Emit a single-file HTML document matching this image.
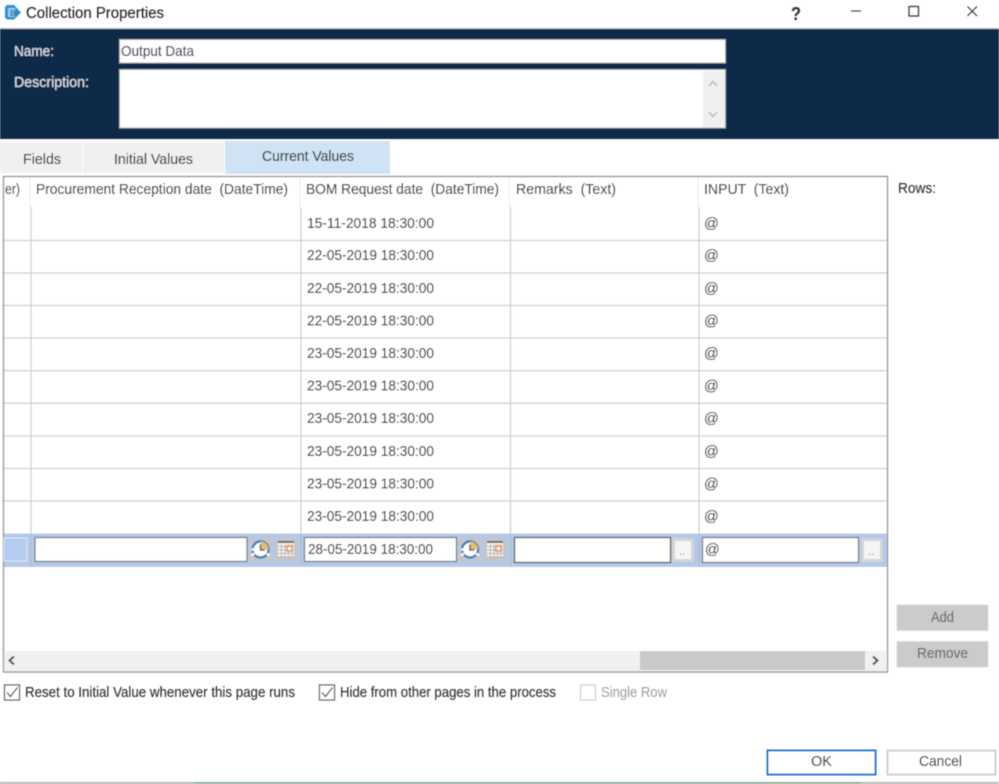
<!DOCTYPE html>
<html lang="en">
<head>
<meta charset="utf-8">
<title>Collection Properties</title>
<style>
html,body{margin:0;padding:0;background:#fff;width:999px;height:784px;overflow:hidden}
svg{display:block}
text{font-family:"Liberation Sans",sans-serif;font-size:14.6px;fill:#2e2e2e;white-space:pre;stroke:#2e2e2e;stroke-width:.12px}
.g{filter:url(#b)}
</style>
</head>
<body>
<svg width="999" height="784" viewBox="0 0 999 784" xmlns="http://www.w3.org/2000/svg">
<defs>
<filter id="b" x="-2%" y="-2%" width="104%" height="104%"><feGaussianBlur stdDeviation="0.42"/></filter>
<g id="clock">
  <rect x="0" y="0" width="22" height="23" fill="#c6c6c6"/>
  <circle cx="11" cy="11.500" r="8" fill="#fff" stroke="#3b7fbd" stroke-width="2.400"/>
  <path d="M11 3.500a8 8 0 0 1 8 8h-8z" fill="#e6bf72"/>
  <path d="M2 11.500h3M17 15.500l3 2M5 15.500l-3 2" stroke="#fff" stroke-width="2.200" fill="none"/>
  <path d="M11 6.500v5.500h4.500" fill="none" stroke="#666" stroke-width="1.600"/>
</g>
<g id="cal">
  <rect x="0" y="0" width="22" height="23" fill="#c6c6c6"/>
  <rect x="3" y="3" width="16" height="16" fill="#f4f4f4"/>
  <rect x="3" y="3" width="16" height="2" fill="#666"/>
  <path d="M3 8.500h16M3 12h16M3 15.500h16M3 19h16M6.500 6v13M10 6v13M13.500 6v13M17 6v13" stroke="#a8a8a8" stroke-width=".8" fill="none"/>
  <rect x="12" y="8" width="5" height="5" fill="#fff" stroke="#e8954c" stroke-width="1.700"/>
</g>
<g id="dots">
  <rect x="0" y="0" width="22" height="24" fill="#d2d4d8"/>
  <rect x="3" y="3" width="16" height="18" fill="#f5f5f5"/>
</g>
</defs>

<rect width="999" height="784" fill="#fff"/>

<g class="g">
<!-- title bar -->
<path d="M7 5h7l7 7.500-7 7H7l-2-2V7z" fill="#2b8fd0"/>
<rect x="8" y="8" width="7" height="9" fill="#9ccdec"/>
<text x="10" y="16" style="font-size:8px;font-weight:bold;fill:#2b6fa8;stroke:none">B</text>
<text x="26" y="18" textLength="138" lengthAdjust="spacingAndGlyphs" style="font-size:15.500px;fill:#222">Collection Properties</text>
<text x="791" y="20" textLength="10" lengthAdjust="spacingAndGlyphs" style="font-size:18px;font-weight:bold;fill:#333">?</text>
<path d="M851 11h10" stroke="#555" stroke-width="1.300"/>
<rect x="909" y="6.500" width="9.500" height="9.500" fill="none" stroke="#333" stroke-width="1.200"/>
<path d="M967.500 6.500l9.500 9.500M977 6.500l-9.500 9.500" stroke="#333" stroke-width="1.100"/>
<rect x="0" y="28" width="999" height="1" fill="#b9bfc5"/>

<!-- header -->
<rect x="0" y="29" width="999" height="110" fill="#0e2a48"/>
<text x="14" y="56" textLength="40" lengthAdjust="spacingAndGlyphs" style="fill:#d8dde2;stroke:#d8dde2;stroke-width:.15px;font-size:14.500px">Name:</text>
<text x="14" y="87" textLength="75" lengthAdjust="spacingAndGlyphs" style="fill:#d8dde2;stroke:#d8dde2;stroke-width:.15px;font-size:14.500px">Description:</text>
<rect x="119.500" y="39.500" width="606" height="23.500" fill="#fff" stroke="#a0a4a8"/>
<text x="121" y="56" textLength="73" lengthAdjust="spacingAndGlyphs" style="fill:#2a2a50;stroke:#2a2a50">Output Data</text>
<rect x="119.500" y="69.500" width="606" height="58.500" fill="#fff" stroke="#a0a4a8"/>
<rect x="703" y="71" width="22" height="56" fill="#f0f0f0"/>
<path d="M709 86l4-4.500 4 4.500M709 112l4 4.500 4-4.500" fill="none" stroke="#c4c4c4" stroke-width="1.800"/>

<!-- tabs -->
<rect x="0" y="142" width="82" height="31" fill="#f0f0f0"/>
<rect x="83" y="142" width="141" height="31" fill="#f0f0f0"/>
<rect x="225" y="141" width="165" height="33" fill="#cfe3f5"/>
<text x="23" y="164" textLength="38" lengthAdjust="spacingAndGlyphs">Fields</text>
<text x="114" y="164" textLength="79" lengthAdjust="spacingAndGlyphs">Initial Values</text>
<text x="262" y="161" textLength="92" lengthAdjust="spacingAndGlyphs">Current Values</text>

<!-- grid frame -->
<rect x="3.500" y="176.500" width="884" height="495.500" fill="#fff" stroke="#8f8f8f" stroke-width="1.300"/>

<!-- column lines + row lines -->
<g stroke="#cfcfcf" stroke-width="1.300" fill="none">
<path d="M31 207V534M301 207V534M510.500 207V534M699 207V534"/>
<path d="M4 240.500H887M4 273H887M4 305.500H887M4 338H887M4 370.700H887M4 403.200H887M4 436H887M4 468.500H887M4 501H887"/>
</g>
<path d="M30 177V207M300 177V207M509.500 177V207M698 177V207" stroke="#eeeeee" stroke-width="1.300"/>

<!-- header text -->
<text x="5" y="194" textLength="15" lengthAdjust="spacingAndGlyphs">er)</text>
<text x="36" y="194" textLength="252" lengthAdjust="spacingAndGlyphs">Procurement Reception date  (DateTime)</text>
<text x="306" y="194" textLength="193" lengthAdjust="spacingAndGlyphs">BOM Request date  (DateTime)</text>
<text x="516" y="194" textLength="100" lengthAdjust="spacingAndGlyphs">Remarks  (Text)</text>
<text x="704" y="194" textLength="85" lengthAdjust="spacingAndGlyphs">INPUT  (Text)</text>
<text x="898" y="193" textLength="38" lengthAdjust="spacingAndGlyphs">Rows:</text>

<!-- rows -->
<text x="307" y="228" textLength="127" lengthAdjust="spacingAndGlyphs">15-11-2018 18:30:00</text>
<text x="704" y="228">@</text>
<text x="307" y="260" textLength="127" lengthAdjust="spacingAndGlyphs">22-05-2019 18:30:00</text>
<text x="704" y="260">@</text>
<text x="307" y="293" textLength="127" lengthAdjust="spacingAndGlyphs">22-05-2019 18:30:00</text>
<text x="704" y="293">@</text>
<text x="307" y="325.500" textLength="127" lengthAdjust="spacingAndGlyphs">22-05-2019 18:30:00</text>
<text x="704" y="325.500">@</text>
<text x="307" y="358" textLength="127" lengthAdjust="spacingAndGlyphs">23-05-2019 18:30:00</text>
<text x="704" y="358">@</text>
<text x="307" y="390.500" textLength="127" lengthAdjust="spacingAndGlyphs">23-05-2019 18:30:00</text>
<text x="704" y="390.500">@</text>
<text x="307" y="423" textLength="127" lengthAdjust="spacingAndGlyphs">23-05-2019 18:30:00</text>
<text x="704" y="423">@</text>
<text x="307" y="456" textLength="127" lengthAdjust="spacingAndGlyphs">23-05-2019 18:30:00</text>
<text x="704" y="456">@</text>
<text x="307" y="488.500" textLength="127" lengthAdjust="spacingAndGlyphs">23-05-2019 18:30:00</text>
<text x="704" y="488.500">@</text>
<text x="307" y="521" textLength="127" lengthAdjust="spacingAndGlyphs">23-05-2019 18:30:00</text>
<text x="704" y="521">@</text>

<!-- edit row -->
<rect x="4" y="533.500" width="883" height="33.500" fill="#b4c9e8"/>
<rect x="4" y="538" width="23" height="23" fill="#b4cdf0" stroke="#dfe6ef"/>
<path d="M31 534v33M301 534v33M510.500 534v33M699 534v33" stroke="#a9bbd2" stroke-width="1"/>

<rect x="35" y="537.500" width="212" height="24" fill="#fff" stroke="#7c7c7c" stroke-width="1.300"/>
<use href="#clock" x="249.500" y="538"/>
<use href="#cal" x="275" y="538"/>

<rect x="304.500" y="537.500" width="152" height="24" fill="#fff" stroke="#7c7c7c" stroke-width="1.300"/>
<text x="308" y="554" textLength="125" lengthAdjust="spacingAndGlyphs">28-05-2019 18:30:00</text>
<use href="#clock" x="459" y="538"/>
<use href="#cal" x="484" y="538"/>

<rect x="514.500" y="537.500" width="156" height="25" fill="#fff" stroke="#555" stroke-width="1.300"/>
<use href="#dots" x="672" y="538"/>
<text x="679" y="555" style="font-size:11px;fill:#6a5a8a;stroke:none">..</text>

<rect x="702.500" y="537.500" width="156" height="25" fill="#fff" stroke="#7c7c7c" stroke-width="1.300"/>
<text x="705" y="554">@</text>
<use href="#dots" x="861" y="538"/>
<text x="868" y="555" style="font-size:11px;fill:#6a5a8a;stroke:none">..</text>

<!-- scrollbar -->
<rect x="4" y="651" width="883" height="20" fill="#f0f0f0"/>
<rect x="640" y="651" width="225" height="19" fill="#c9c9c9"/>
<path d="M14 656.500l-4.500 4 4.500 4M873 656.500l4.500 4-4.500 4" fill="none" stroke="#444" stroke-width="1.900"/>

<!-- side buttons -->
<rect x="897" y="605" width="91" height="25.500" fill="#cbcbcb" stroke="#dcdcdc"/>
<text x="931" y="622" textLength="23" lengthAdjust="spacingAndGlyphs" style="fill:#666;stroke:#666">Add</text>
<rect x="897" y="641.500" width="91" height="25.500" fill="#cbcbcb" stroke="#dcdcdc"/>
<text x="917" y="658" textLength="51" lengthAdjust="spacingAndGlyphs" style="fill:#666;stroke:#666">Remove</text>

<!-- checkboxes -->
<rect x="4.500" y="685" width="15" height="15" fill="#fff" stroke="#555" stroke-width="1.200"/>
<path d="M7 692.500l3.500 4 7-9" fill="none" stroke="#333" stroke-width="1.200"/>
<text x="25" y="697" textLength="270" lengthAdjust="spacingAndGlyphs">Reset to Initial Value whenever this page runs</text>
<rect x="319.500" y="685" width="15" height="15" fill="#fff" stroke="#555" stroke-width="1.200"/>
<path d="M322 692.500l3.500 4 7-9" fill="none" stroke="#333" stroke-width="1.200"/>
<text x="340" y="697" textLength="216" lengthAdjust="spacingAndGlyphs">Hide from other pages in the process</text>
<rect x="580.500" y="685" width="15" height="15" fill="#fff" stroke="#c8c8c8" stroke-width="1.100"/>
<text x="601" y="697" textLength="66" lengthAdjust="spacingAndGlyphs" style="fill:#a4a4a4;stroke:#a4a4a4">Single Row</text>

<!-- OK / Cancel -->
<rect x="767.500" y="750.500" width="108" height="24" fill="#fff" stroke="#1278d0" stroke-width="2"/>
<text x="811" y="766" textLength="21" lengthAdjust="spacingAndGlyphs">OK</text>
<rect x="887.500" y="750.500" width="108" height="24" fill="#fff" stroke="#cfcfcf" stroke-width="2"/>
<text x="919" y="766" textLength="43" lengthAdjust="spacingAndGlyphs">Cancel</text>

<!-- bottom remnant -->
<rect x="0" y="782" width="999" height="2" fill="#b8b8b8"/>
<rect x="193" y="782" width="668" height="2" fill="#8fb09c"/>
</g>
</svg>
</body>
</html>
